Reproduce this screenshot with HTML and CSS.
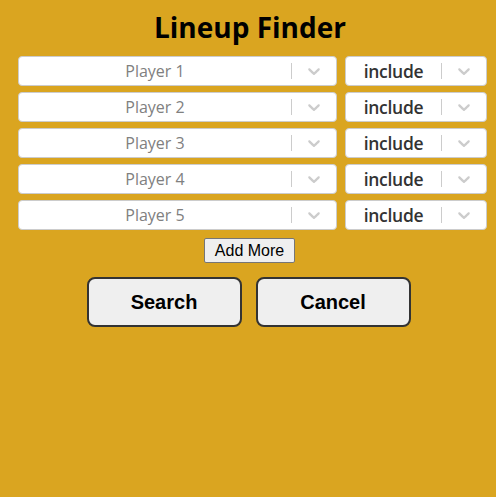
FILE: index.html
```html
<!DOCTYPE html>
<html>
<head>
<meta charset="utf-8">
<link rel="stylesheet" href="styles.css">
</head>
<body>
<div class="app">
  <h1 class="title">Lineup Finder</h1>
  <div class="rows">
    <div class="row">
      <div class="select"><div class="value placeholder">Player 1</div><span class="sep"></span><svg class="chev" viewBox="0 0 20 20"><path d="M4.516 7.548c0.436-0.446 1.043-0.481 1.576 0l3.908 3.747 3.908-3.747c0.533-0.481 1.141-0.446 1.574 0 0.436 0.445 0.408 1.197 0 1.615-0.406 0.418-4.695 4.502-4.695 4.502-0.217 0.223-0.502 0.335-0.787 0.335s-0.57-0.112-0.789-0.335c0 0-4.287-4.084-4.695-4.502s-0.436-1.17 0-1.615z"/></svg></div>
      <div class="select"><div class="value chosen">include</div><span class="sep"></span><svg class="chev" viewBox="0 0 20 20"><path d="M4.516 7.548c0.436-0.446 1.043-0.481 1.576 0l3.908 3.747 3.908-3.747c0.533-0.481 1.141-0.446 1.574 0 0.436 0.445 0.408 1.197 0 1.615-0.406 0.418-4.695 4.502-4.695 4.502-0.217 0.223-0.502 0.335-0.787 0.335s-0.57-0.112-0.789-0.335c0 0-4.287-4.084-4.695-4.502s-0.436-1.17 0-1.615z"/></svg></div>
    </div>
    <div class="row">
      <div class="select"><div class="value placeholder">Player 2</div><span class="sep"></span><svg class="chev" viewBox="0 0 20 20"><path d="M4.516 7.548c0.436-0.446 1.043-0.481 1.576 0l3.908 3.747 3.908-3.747c0.533-0.481 1.141-0.446 1.574 0 0.436 0.445 0.408 1.197 0 1.615-0.406 0.418-4.695 4.502-4.695 4.502-0.217 0.223-0.502 0.335-0.787 0.335s-0.57-0.112-0.789-0.335c0 0-4.287-4.084-4.695-4.502s-0.436-1.17 0-1.615z"/></svg></div>
      <div class="select"><div class="value chosen">include</div><span class="sep"></span><svg class="chev" viewBox="0 0 20 20"><path d="M4.516 7.548c0.436-0.446 1.043-0.481 1.576 0l3.908 3.747 3.908-3.747c0.533-0.481 1.141-0.446 1.574 0 0.436 0.445 0.408 1.197 0 1.615-0.406 0.418-4.695 4.502-4.695 4.502-0.217 0.223-0.502 0.335-0.787 0.335s-0.57-0.112-0.789-0.335c0 0-4.287-4.084-4.695-4.502s-0.436-1.17 0-1.615z"/></svg></div>
    </div>
    <div class="row">
      <div class="select"><div class="value placeholder">Player 3</div><span class="sep"></span><svg class="chev" viewBox="0 0 20 20"><path d="M4.516 7.548c0.436-0.446 1.043-0.481 1.576 0l3.908 3.747 3.908-3.747c0.533-0.481 1.141-0.446 1.574 0 0.436 0.445 0.408 1.197 0 1.615-0.406 0.418-4.695 4.502-4.695 4.502-0.217 0.223-0.502 0.335-0.787 0.335s-0.57-0.112-0.789-0.335c0 0-4.287-4.084-4.695-4.502s-0.436-1.17 0-1.615z"/></svg></div>
      <div class="select"><div class="value chosen">include</div><span class="sep"></span><svg class="chev" viewBox="0 0 20 20"><path d="M4.516 7.548c0.436-0.446 1.043-0.481 1.576 0l3.908 3.747 3.908-3.747c0.533-0.481 1.141-0.446 1.574 0 0.436 0.445 0.408 1.197 0 1.615-0.406 0.418-4.695 4.502-4.695 4.502-0.217 0.223-0.502 0.335-0.787 0.335s-0.57-0.112-0.789-0.335c0 0-4.287-4.084-4.695-4.502s-0.436-1.17 0-1.615z"/></svg></div>
    </div>
    <div class="row">
      <div class="select"><div class="value placeholder">Player 4</div><span class="sep"></span><svg class="chev" viewBox="0 0 20 20"><path d="M4.516 7.548c0.436-0.446 1.043-0.481 1.576 0l3.908 3.747 3.908-3.747c0.533-0.481 1.141-0.446 1.574 0 0.436 0.445 0.408 1.197 0 1.615-0.406 0.418-4.695 4.502-4.695 4.502-0.217 0.223-0.502 0.335-0.787 0.335s-0.57-0.112-0.789-0.335c0 0-4.287-4.084-4.695-4.502s-0.436-1.17 0-1.615z"/></svg></div>
      <div class="select"><div class="value chosen">include</div><span class="sep"></span><svg class="chev" viewBox="0 0 20 20"><path d="M4.516 7.548c0.436-0.446 1.043-0.481 1.576 0l3.908 3.747 3.908-3.747c0.533-0.481 1.141-0.446 1.574 0 0.436 0.445 0.408 1.197 0 1.615-0.406 0.418-4.695 4.502-4.695 4.502-0.217 0.223-0.502 0.335-0.787 0.335s-0.57-0.112-0.789-0.335c0 0-4.287-4.084-4.695-4.502s-0.436-1.17 0-1.615z"/></svg></div>
    </div>
    <div class="row">
      <div class="select"><div class="value placeholder">Player 5</div><span class="sep"></span><svg class="chev" viewBox="0 0 20 20"><path d="M4.516 7.548c0.436-0.446 1.043-0.481 1.576 0l3.908 3.747 3.908-3.747c0.533-0.481 1.141-0.446 1.574 0 0.436 0.445 0.408 1.197 0 1.615-0.406 0.418-4.695 4.502-4.695 4.502-0.217 0.223-0.502 0.335-0.787 0.335s-0.57-0.112-0.789-0.335c0 0-4.287-4.084-4.695-4.502s-0.436-1.17 0-1.615z"/></svg></div>
      <div class="select"><div class="value chosen">include</div><span class="sep"></span><svg class="chev" viewBox="0 0 20 20"><path d="M4.516 7.548c0.436-0.446 1.043-0.481 1.576 0l3.908 3.747 3.908-3.747c0.533-0.481 1.141-0.446 1.574 0 0.436 0.445 0.408 1.197 0 1.615-0.406 0.418-4.695 4.502-4.695 4.502-0.217 0.223-0.502 0.335-0.787 0.335s-0.57-0.112-0.789-0.335c0 0-4.287-4.084-4.695-4.502s-0.436-1.17 0-1.615z"/></svg></div>
    </div>
  </div>
  <div class="add-wrap"><button class="add-btn">Add More</button></div>
  <div class="actions">
    <button class="action-btn">Search</button>
    <button class="action-btn">Cancel</button>
  </div>
</div>
</body>
</html>
```
FILE: styles.css
```css
html, body {
  margin: 0;
  padding: 0;
  background: #DAA520;
  height: 100%;
}
.app {
  font-family: "Open Sans", "Noto Sans", sans-serif;
}
.title {
  margin: 0;
  padding: 9px 0 0 4px;
  height: 46px;
  box-sizing: border-box;
  font-size: 28px;
  line-height: 36px;
  font-weight: 700;
  text-align: center;
  color: #000;
}
.rows {
  display: flex;
  flex-direction: column;
  gap: 6.2px;
  padding: 0 9px 0 18px;
  margin-top: 9.5px;
}
.row {
  display: grid;
  grid-template-columns: 1fr 142px;
  gap: 8px;
}
.select {
  height: 30px;
  box-sizing: border-box;
  background: #fff;
  border: 1px solid #ccc;
  border-radius: 4px;
  display: flex;
  align-items: center;
}
.value {
  flex: 1;
  text-align: center;
  font-size: 16px;
  color: #333;
  padding: 0 8px;
}
.value.placeholder {
  color: #808080;
}
.value.chosen {
  font-size: 17.5px;
  font-weight: 600;
  letter-spacing: -0.3px;
}
.sep {
  width: 1px;
  height: 16px;
  background: #ccc;
}
.chev {
  width: 20px;
  height: 20px;
  fill: #ccc;
  margin: 0 12px 0 12px;
}
.add-wrap {
  display: flex;
  justify-content: center;
  margin-top: 8px;
  padding-left: 3px;
}
.add-btn {
  font-family: "Liberation Sans", Arial, sans-serif;
  font-size: 16px;
  height: 25px;
  padding: 0 10px;
  background: #efefef;
  border: 1px solid #767676;
  border-radius: 2px;
  color: #000;
}
.actions {
  display: flex;
  justify-content: center;
  gap: 14px;
  margin-top: 14px;
  padding-left: 1px;
}
.action-btn {
  width: 155px;
  height: 50px;
  font-family: "Liberation Sans", Arial, sans-serif;
  font-size: 20px;
  font-weight: 700;
  background: #efefef;
  border: 2px solid #333;
  border-radius: 8px;
  color: #000;
}
```
